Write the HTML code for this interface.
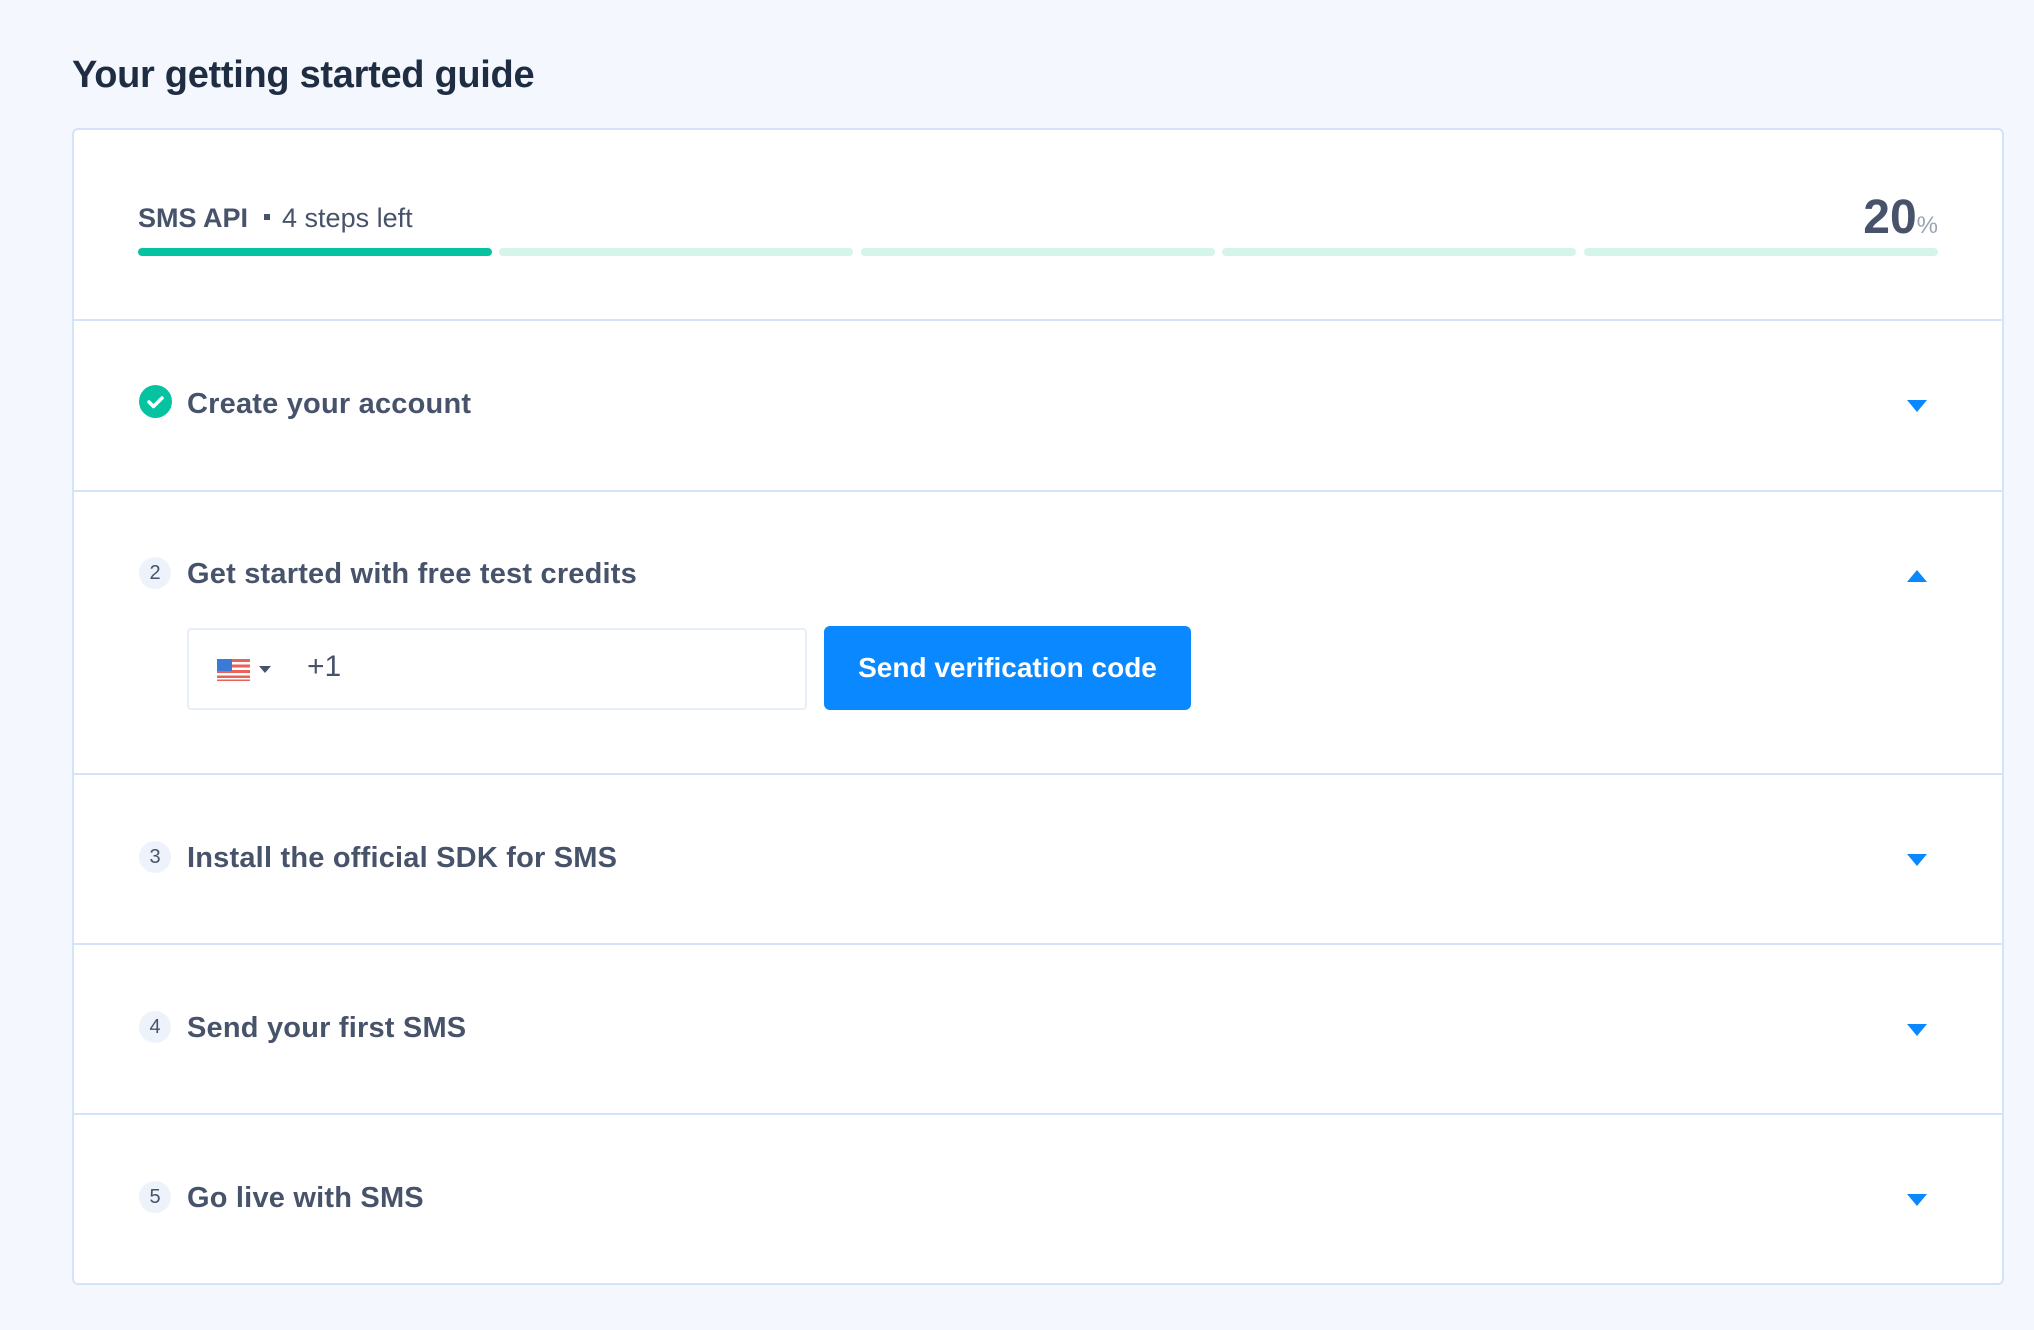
<!DOCTYPE html>
<html><head><meta charset="utf-8"><style>
*{margin:0;padding:0;box-sizing:border-box}
body{width:2034px;height:1330px;background:#f4f8fe;font-family:"Liberation Sans",sans-serif;position:relative;overflow:hidden}
.abs{position:absolute}
h1{position:absolute;left:72px;top:54px;font-size:38px;font-weight:bold;color:#1f2d42;letter-spacing:-0.3px}
.card{position:absolute;left:72px;top:128px;width:1932px;height:1157px;background:#fff;border:2px solid #d4e3fa;border-radius:6px}
.div{position:absolute;left:0;width:100%;height:2px;background:#d4e3fa}
.seg{position:absolute;top:118px;height:8px;border-radius:4px;background:#d5f5ea;width:354px}
.title{position:absolute;left:113px;font-size:29px;color:#47536a;font-weight:bold;letter-spacing:0.2px}
.num{position:absolute;left:65px;width:32px;height:32px;border-radius:50%;background:#eef3fb;color:#47536a;font-size:20px;text-align:center;line-height:32px}
.arr{position:absolute;left:1833px;width:0;height:0;border-left:10px solid transparent;border-right:10px solid transparent}
.down{border-top:12px solid #0a88ff}
.up{border-bottom:12px solid #0a88ff}
</style></head><body>
<h1>Your getting started guide</h1>
<div class="card">
  <div class="abs" style="left:64px;top:73px;font-size:27px;color:#47536a"><b>SMS API</b><span style="display:inline-block;width:6px;height:6px;background:#47536a;margin:0 12px 5px 16px;vertical-align:middle"></span>4 steps left</div>
  <div class="abs" style="right:64px;top:60px;color:#47536a"><b style="font-size:48px">20</b><span style="font-size:24px;color:#9aa4b2">%</span></div>
  <div class="seg" style="left:64px;background:#05c3a0"></div>
  <div class="seg" style="left:425px"></div>
  <div class="seg" style="left:787px"></div>
  <div class="seg" style="left:1148px"></div>
  <div class="seg" style="left:1510px"></div>
  <div class="div" style="top:189px"></div>

  <svg class="abs" style="left:65px;top:255px" width="33" height="33" viewBox="0 0 33 33"><circle cx="16.5" cy="16.5" r="16.5" fill="#05c3a0"/><path d="M10 17l4.5 4.5 8.5-8.5" stroke="#fff" stroke-width="3.5" fill="none" stroke-linecap="round" stroke-linejoin="round"/></svg>
  <div class="title" style="top:258px">Create your account</div>
  <div class="arr down" style="top:270px"></div>
  <div class="div" style="top:360px"></div>

  <div class="num" style="top:427px">2</div>
  <div class="title" style="top:428px">Get started with free test credits</div>
  <div class="arr up" style="top:440px"></div>
  <div class="abs" style="left:113px;top:498px;width:620px;height:82px;border:2px solid #e8eef7;border-radius:4px">
    <svg class="abs" style="left:28px;top:29px" width="33" height="22" viewBox="0 0 33 22"><rect width="33" height="22" fill="#e8635a"/><rect y="3" width="33" height="2.5" fill="#fff"/><rect y="8.5" width="33" height="2.5" fill="#fff"/><rect y="14" width="33" height="2.5" fill="#fff"/><rect y="19" width="33" height="1.5" fill="#fff"/><rect width="15" height="12" fill="#3a7bd5"/></svg>
    <div class="abs" style="left:70px;top:36px;width:0;height:0;border-left:6px solid transparent;border-right:6px solid transparent;border-top:7px solid #47536a"></div>
    <div class="abs" style="left:118px;top:20px;font-size:30px;color:#47536a">+1</div>
  </div>
  <div class="abs" style="left:750px;top:496px;width:367px;height:84px;background:#0a88ff;border-radius:6px;color:#fff;font-size:28px;font-weight:bold;text-align:center;line-height:84px">Send verification code</div>
  <div class="div" style="top:643px"></div>

  <div class="num" style="top:711px">3</div>
  <div class="title" style="top:712px">Install the official SDK for SMS</div>
  <div class="arr down" style="top:724px"></div>
  <div class="div" style="top:813px"></div>

  <div class="num" style="top:881px">4</div>
  <div class="title" style="top:882px">Send your first SMS</div>
  <div class="arr down" style="top:894px"></div>
  <div class="div" style="top:983px"></div>

  <div class="num" style="top:1051px">5</div>
  <div class="title" style="top:1052px">Go live with SMS</div>
  <div class="arr down" style="top:1064px"></div>
</div>
</body></html>
